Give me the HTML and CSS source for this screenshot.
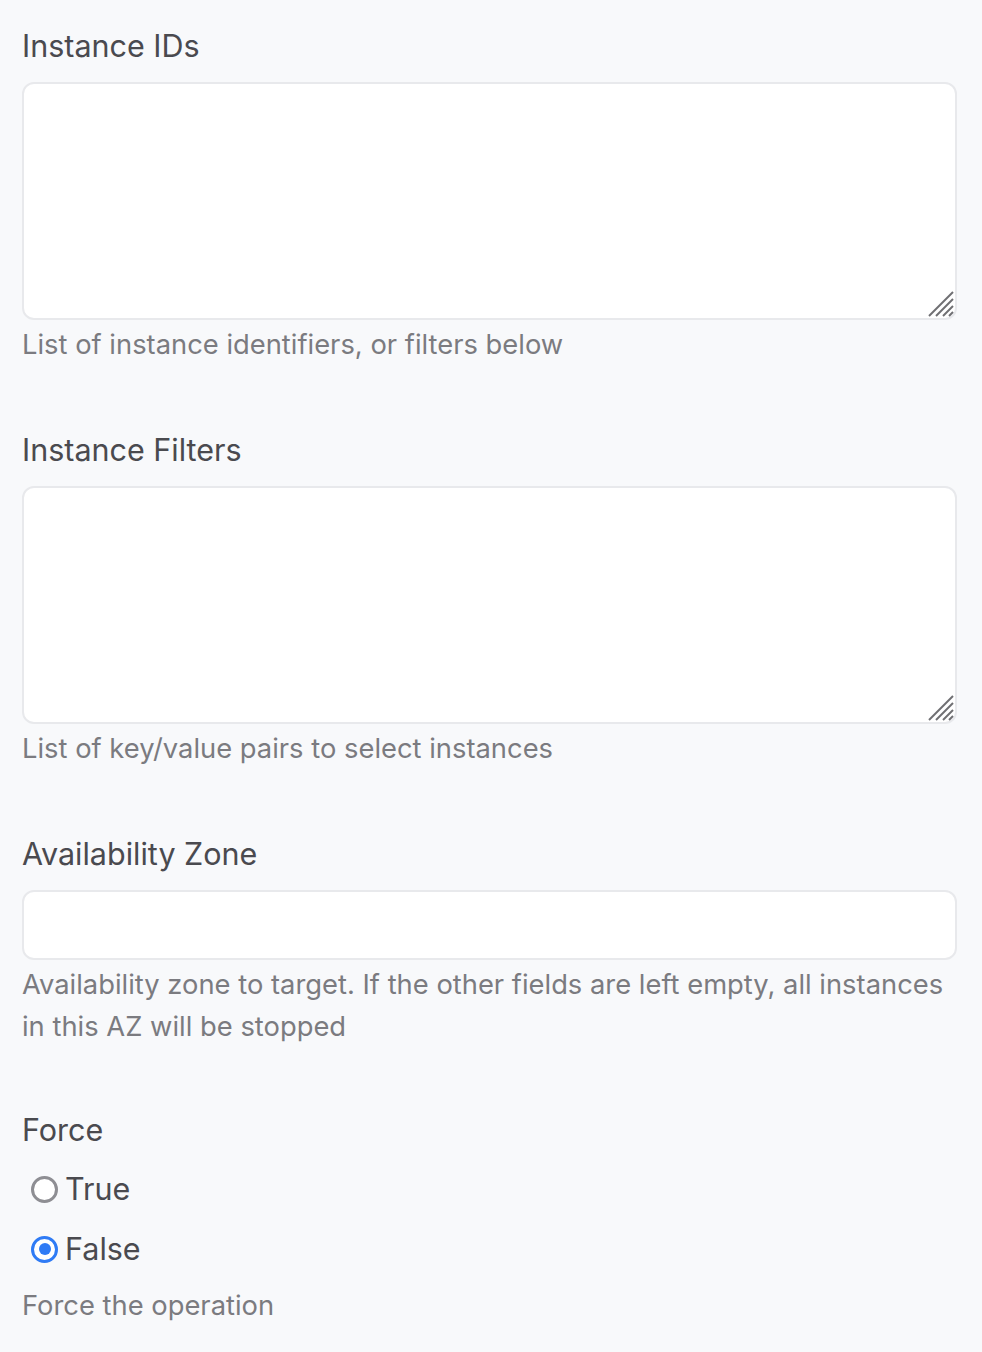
FILE: index.html
```html
<!DOCTYPE html>
<html>
<head>
<meta charset="utf-8">
<link rel="stylesheet" href="styles.css">
</head>
<body>
<form class="form">
  <div class="field">
    <label class="label">Instance IDs</label>
    <div class="area-wrap">
      <textarea class="area"></textarea>
      <svg class="grip" width="26" height="26" viewBox="0 0 26 26"><g stroke="#6f6f72" stroke-width="2" stroke-linecap="butt"><line x1="1" y1="25" x2="25" y2="1"/><line x1="8" y1="25" x2="25" y2="8"/><line x1="15" y1="25" x2="25" y2="15"/><line x1="21" y1="25" x2="25" y2="21"/></g></svg>
    </div>
    <p class="help">List of instance identifiers, or filters below</p>
  </div>
  <div class="field">
    <label class="label">Instance Filters</label>
    <div class="area-wrap">
      <textarea class="area"></textarea>
      <svg class="grip" width="26" height="26" viewBox="0 0 26 26"><g stroke="#6f6f72" stroke-width="2" stroke-linecap="butt"><line x1="1" y1="25" x2="25" y2="1"/><line x1="8" y1="25" x2="25" y2="8"/><line x1="15" y1="25" x2="25" y2="15"/><line x1="21" y1="25" x2="25" y2="21"/></g></svg>
    </div>
    <p class="help">List of key/value pairs to select instances</p>
  </div>
  <div class="field">
    <label class="label">Availability Zone</label>
    <input class="input" type="text">
    <p class="help">Availability zone to target. If the other fields are left empty, all instances in this AZ will be stopped</p>
  </div>
  <div class="field field-last">
    <label class="label">Force</label>
    <div class="radios">
      <label class="radio"><span class="dot"></span><span class="radio-text">True</span></label>
      <label class="radio"><span class="dot checked"></span><span class="radio-text">False</span></label>
    </div>
    <p class="help">Force the operation</p>
  </div>
</form>
</body>
</html>
```
FILE: styles.css
```css
html, body {
  margin: 0;
  padding: 0;
  background: #f8f9fb;
}
body {
  font-family: Inter, "Noto Sans", sans-serif;
  color: #4a4a4f;
}
.form {
  padding: 28px 25px 0 22px;
  display: flex;
  flex-direction: column;
  gap: 66px;
}
.field {
  display: flex;
  flex-direction: column;
}
.field-last {
  margin-top: -2px;
}
.label {
  font-size: 30.5px;
  line-height: 36px;
  margin-bottom: 18px;
  color: #4a4a4f;
}
.area-wrap {
  position: relative;
}
.area {
  display: block;
  box-sizing: border-box;
  width: 100%;
  height: 238px;
  border: 2px solid #e8e9ec;
  border-radius: 12px;
  background: #fff;
  resize: none;
  margin: 0;
}
.grip {
  position: absolute;
  right: 3px;
  bottom: 3px;
}
.input {
  display: block;
  box-sizing: border-box;
  width: 100%;
  height: 70px;
  border: 2px solid #e8e9ec;
  border-radius: 12px;
  background: #fff;
  margin: 0;
}
.help {
  margin: 4px 0 0;
  font-size: 27.35px;
  line-height: 42px;
  color: #7b7b80;
}
.radios {
  display: flex;
  flex-direction: column;
  margin-top: -7px;
  margin-bottom: 2px;
}
.radio {
  display: flex;
  align-items: center;
  height: 60px;
  padding-left: 9px;
}
.dot {
  box-sizing: border-box;
  width: 27px;
  height: 27px;
  border-radius: 50%;
  border: 3px solid #8e8e93;
  background: #fff;
  margin-right: 7px;
  display: flex;
  align-items: center;
  justify-content: center;
}
.dot.checked {
  border: 3.5px solid #2f7bf5;
}
.dot.checked::after {
  content: "";
  width: 12px;
  height: 12px;
  border-radius: 50%;
  background: #2f7bf5;
}
.radio-text {
  font-size: 30.5px;
  line-height: 36px;
  color: #4a4a4f;
}
```
